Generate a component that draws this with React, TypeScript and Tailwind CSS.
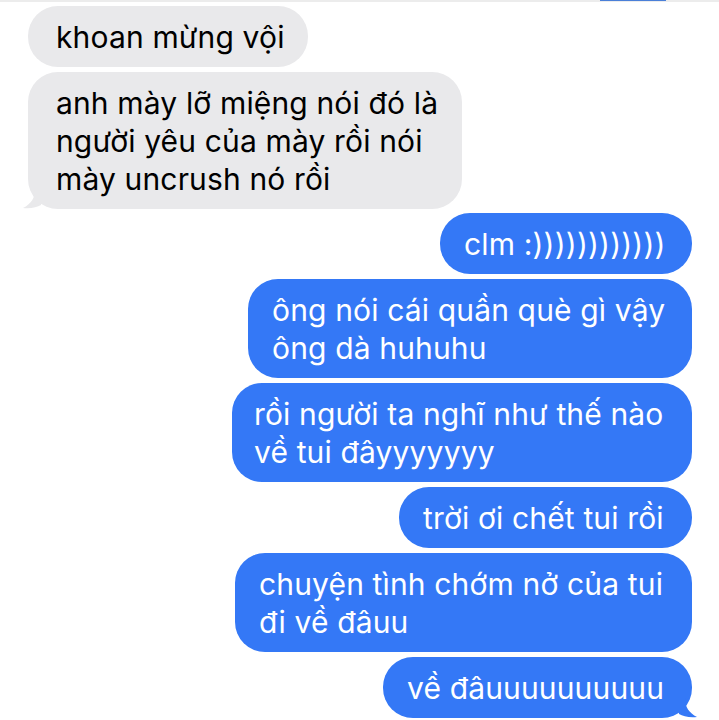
type Msg = {
  side: 'in' | 'out';
  lines: string[];
  w: string;
  pl: string;
  mt: string;
  tail?: boolean;
};

const messages: Msg[] = [
  { side: 'in', lines: ['khoan mừng vội'], w: 'w-[280px]', pl: 'pl-[28px]', mt: 'mt-[4px]' },
  {
    side: 'in',
    lines: ['anh mày lỡ miệng nói đó là', 'người yêu của mày rồi nói', 'mày uncrush nó rồi'],
    w: 'w-[434px]',
    pl: 'pl-[28px]',
    mt: 'mt-[5px]',
    tail: true,
  },
  { side: 'out', lines: ['clm :))))))))))))'], w: 'w-[252px]', pl: 'pl-[24px]', mt: 'mt-[4px]' },
  { side: 'out', lines: ['ông nói cái quần què gì vậy', 'ông dà huhuhu'], w: 'w-[444px]', pl: 'pl-[24px]', mt: 'mt-[5px]' },
  { side: 'out', lines: ['rồi người ta nghĩ như thế nào', 'về tui đâyyyyyyy'], w: 'w-[460px]', pl: 'pl-[22px]', mt: 'mt-[5px]' },
  { side: 'out', lines: ['trời ơi chết tui rồi'], w: 'w-[293px]', pl: 'pl-[24px]', mt: 'mt-[5px]' },
  { side: 'out', lines: ['chuyện tình chớm nở của tui', 'đi về đâuu'], w: 'w-[457px]', pl: 'pl-[24px]', mt: 'mt-[5px]' },
  { side: 'out', lines: ['về đâuuuuuuuuuu'], w: 'w-[309px]', pl: 'pl-[24px]', mt: 'mt-[5px]', tail: true },
];

function Tail({ side }: { side: 'in' | 'out' }) {
  if (side === 'out') {
    return (
      <svg className="absolute right-[-7px] bottom-0" width="20" height="20" viewBox="0 0 20 20">
        <path d="M0 0 L6 0 C6 9 10 15 18 19 C10 20 4 18 0 16 Z" fill="#3478f6" />
      </svg>
    );
  }
  return (
    <svg className="absolute left-[-7px] bottom-0" width="20" height="20" viewBox="0 0 20 20">
      <path d="M20 0 L14 0 C14 9 10 15 2 19 C10 20 16 18 20 16 Z" fill="#e9e9eb" />
    </svg>
  );
}

function Bubble({ m }: { m: Msg }) {
  const out = m.side === 'out';
  return (
    <div
      className={`relative shrink-0 ${m.w} ${m.pl} ${m.mt} py-[11.5px] rounded-[30px] ${
        out ? 'self-end mr-[27px] bg-[#3478f6] text-white' : 'self-start ml-[28px] bg-[#e9e9eb] text-black'
      }`}
    >
      {m.lines.map((l, i) => (
        <div key={i} className="whitespace-nowrap h-[38px]">
          {l}
        </div>
      ))}
      {m.tail && <Tail side={m.side} />}
    </div>
  );
}

export default function App() {
  return (
    <div
      className="w-[719px] h-[720px] overflow-hidden bg-white flex flex-col text-[30px] leading-[38px] tracking-[0.15px]"
      style={{ fontFamily: 'Inter, "Noto Sans", sans-serif' }}
    >
      <div className="h-[2px] bg-[#ececec] flex shrink-0">
        <div className="ml-[600px] w-[66px] h-[1px] bg-[#4a7fd8]" />
      </div>
      {messages.map((m, i) => (
        <Bubble key={i} m={m} />
      ))}
    </div>
  );
}
